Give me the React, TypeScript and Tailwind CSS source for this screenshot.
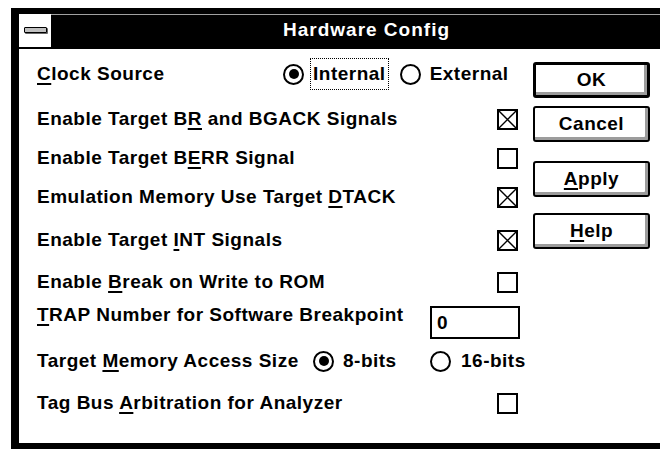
import React from "react";

function Check({ on }: { on?: boolean }) {
  return (
    <span className="flex h-[21px] w-[21px] shrink-0 items-center justify-center border-2 border-black bg-white">
      {on && (
        <svg width="17" height="17" viewBox="0 0 17 17">
          <path d="M0 0L17 17M17 0L0 17" stroke="black" strokeWidth="1.4" />
        </svg>
      )}
    </span>
  );
}

function Radio({ on }: { on?: boolean }) {
  return (
    <span className="flex h-[21px] w-[21px] shrink-0 items-center justify-center rounded-full border-2 border-black bg-white">
      {on && <span className="h-[10px] w-[10px] rounded-full bg-black" />}
    </span>
  );
}

function U({ children }: { children: React.ReactNode }) {
  return <span className="underline decoration-2 underline-offset-[3px]">{children}</span>;
}

function Btn({ children, def, className }: { children: React.ReactNode; def?: boolean; className?: string }) {
  return (
    <div
      className={
        "flex h-[36px] w-[117px] items-center justify-center rounded-[3px] border-black bg-white shadow-[inset_-3px_-3px_0_#9c9c9c] " +
        (def ? "border-[3px] " : "border-2 ") +
        (className ?? "")
      }
    >
      {children}
    </div>
  );
}

function Row({ h, label, children }: { h: string; label: React.ReactNode; children?: React.ReactNode }) {
  return (
    <div className={"flex items-center " + h}>
      <span>{label}</span>
      <span className="ml-auto">{children}</span>
    </div>
  );
}

export default function App() {
  return (
    <div className="flex h-[449px] w-[660px] flex-col overflow-hidden whitespace-nowrap bg-white pl-[11px] pt-[8px] font-['Liberation_Sans',Arial,sans-serif] text-[19px] font-bold tracking-[0.5px] text-black">
      <div className="flex flex-1 flex-col border-b-[6px] border-l-8 border-t-[6px] border-black">
        {/* title bar */}
        <div className="flex h-[35px] border-b-2 border-black">
          <div className="flex w-[32px] items-center justify-center bg-white pb-[2px]">
            <span className="h-[6px] w-[23px] rounded-[1px] border border-black bg-[#c0c0c0] shadow-[1px_1px_0_#666]" />
          </div>
          <div className="flex flex-1 items-center bg-black pl-[232px] tracking-[1px] text-white shadow-[inset_0_1px_0_#a0a0a0]">
            Hardware Config
          </div>
        </div>

        {/* client */}
        <div className="flex flex-1 pt-[5px]">
          <div className="flex w-[508px] shrink-0 flex-col pl-[18px] pr-[9px]">
            <div className="flex h-[40px] items-center">
              <span className="w-[246px] shrink-0">
                <U>C</U>lock Source
              </span>
              <Radio on />
              <span className="ml-[6px] border border-dotted border-black px-[2px] py-[1px]">Internal</span>
              <span className="ml-[11px]">
                <Radio />
              </span>
              <span className="ml-[9px]">External</span>
            </div>
            <Row h="h-[50px]" label={<>Enable Target B<U>R</U> and BGACK Signals</>}>
              <Check on />
            </Row>
            <Row h="h-[28px]" label={<>Enable Target B<U>E</U>RR Signal</>}>
              <Check />
            </Row>
            <Row h="h-[50px]" label={<>Emulation Memory Use Target <U>D</U>TACK</>}>
              <Check on />
            </Row>
            <Row h="h-[36px]" label={<>Enable Target <U>I</U>NT Signals</>}>
              <Check on />
            </Row>
            <Row h="h-[48px]" label={<>Enable <U>B</U>reak on Write to ROM</>}>
              <Check />
            </Row>
            <div className="flex h-[33px] items-start">
              <span className="mt-[-5px]">
                <U>T</U>RAP Number for Software Breakpoint
              </span>
              <div className="ml-auto mr-[-2px] flex h-[33px] w-[90px] items-center border-2 border-black pl-[5px] pt-[2px]">
                0
              </div>
            </div>
            <div className="flex h-[44px] items-center">
              <span className="w-[276px] shrink-0">
                Target <U>M</U>emory Access Size
              </span>
              <div className="flex w-[117px] shrink-0 items-center">
                <Radio on />
                <span className="ml-[9px]">8-bits</span>
              </div>
              <Radio />
              <span className="ml-[10px]">16-bits</span>
            </div>
            <Row h="h-[40px]" label={<>Tag Bus <U>A</U>rbitration for Analyzer</>}>
              <Check />
            </Row>
          </div>

          <div className="ml-[6px] flex flex-col pt-[8px]">
            <Btn def>OK</Btn>
            <Btn className="mt-[8px]">Cancel</Btn>
            <Btn className="mt-[19px]">
              <span>
                <U>A</U>pply
              </span>
            </Btn>
            <Btn className="mt-[16px]">
              <span>
                <U>H</U>elp
              </span>
            </Btn>
          </div>
        </div>
      </div>
    </div>
  );
}
